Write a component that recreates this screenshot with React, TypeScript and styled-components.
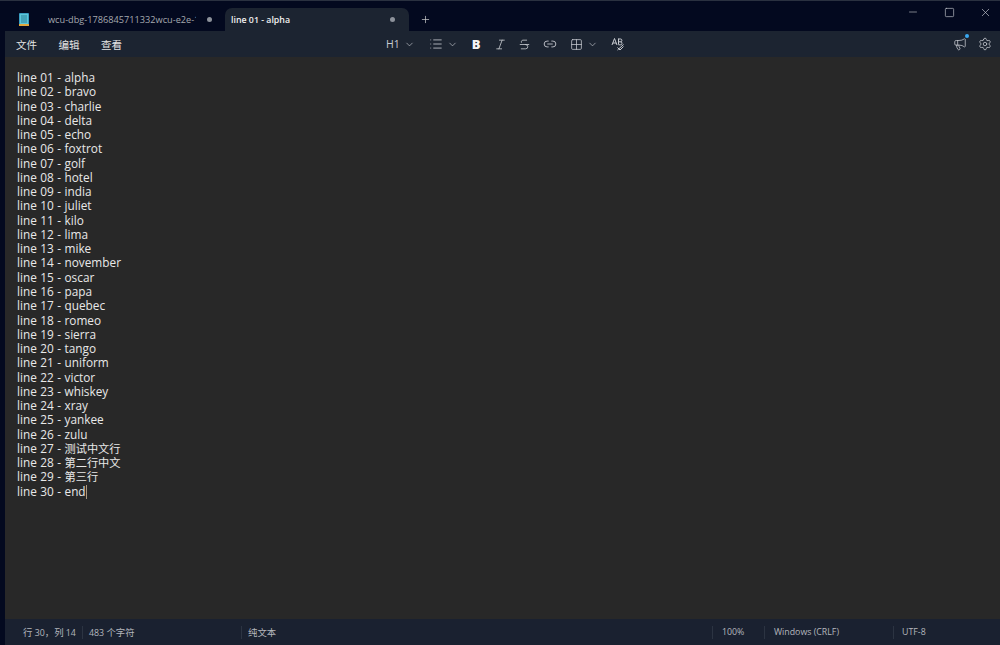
import React from 'react';
import styled, { createGlobalStyle } from 'styled-components';
import { ChevronDown, Italic, Strikethrough, Link2, Grid2x2, List, Settings, Megaphone, Plus, X, Minus, Square } from 'lucide-react';

const Global = createGlobalStyle`
  html, body { margin: 0; padding: 0; background: #03091f; }
  #root { width: 1000px; height: 645px; overflow: hidden; }
`;

const stack = `"Open Sans", "Noto Sans", "Noto Sans CJK SC", sans-serif`;

const Frame = styled.div`
  width: 1000px;
  height: 645px;
  display: flex;
  flex-direction: column;
  background: #03091f;
  border-top: 1px solid #2a3140;
  box-sizing: border-box;
  font-family: ${stack};
  color: #d8d8d8;
  overflow: hidden;
`;

const TitleBar = styled.div`
  height: 30px;
  display: flex;
  align-items: flex-end;
  padding-left: 5px;
  flex: none;
`;

const AppIcon = styled.div`
  width: 36px;
  height: 23px;
  display: flex;
  align-items: center;
  justify-content: center;
  padding-left: 2px;
  box-sizing: border-box;
  margin-right: 1px;
`;

const Tab = styled.div<{ $active?: boolean }>`
  width: ${p => (p.$active ? '184px' : '183px')};
  height: 23px;
  box-sizing: border-box;
  display: flex;
  align-items: center;
  justify-content: space-between;
  padding: ${p => (p.$active ? '0 14px 0 6px' : '0 13px 0 6px')};
  background: ${p => (p.$active ? '#1c2431' : 'transparent')};
  border-radius: 7px 7px 0 0;
  font-size: ${p => (p.$active ? '8.8px' : '9.2px')};
  font-weight: ${p => (p.$active ? 600 : 400)};
  color: ${p => (p.$active ? '#f0f0f0' : '#a5a8ae')};
  white-space: nowrap;
`;

const TabLabel = styled.span`
  width: 148px;
  overflow: hidden;
`;

const Dot = styled.span`
  width: 5px;
  height: 5px;
  border-radius: 50%;
  background: #8d929b;
  flex: none;
`;

const NewTab = styled.div`
  width: 33px;
  height: 23px;
  display: flex;
  align-items: center;
  justify-content: center;
  color: #c8c8c8;
`;

const WindowButtons = styled.div`
  margin-left: auto;
  align-self: flex-start;
  display: flex;
  gap: 6px;
  color: #c9ccd2;
`;

const WindowButton = styled.div`
  width: 30px;
  height: 22px;
  display: flex;
  align-items: center;
  justify-content: center;
`;

const Toolbar = styled.div`
  height: 26px;
  flex: none;
  margin-left: 5px;
  background: #1c2431;
  display: grid;
  grid-template-columns: 370px auto 1fr;
  align-items: center;
  padding: 0 8px 0 11px;
`;

const Menu = styled.div`
  display: flex;
  gap: 21.5px;
  font-size: 10.5px;
  color: #e2e2e2;
`;

const Tools = styled.div`
  display: flex;
  align-items: center;
  color: #c9ccd2;
`;

const Tool = styled.div<{ $gap?: number }>`
  display: flex;
  align-items: center;
  gap: 4px;
  margin-right: ${p => p.$gap ?? 0}px;
  font-size: 10.5px;
`;

const BoldGlyph = styled.span`
  width: 13px;
  text-align: center;
  font-size: 13px;
  font-weight: 800;
  line-height: 13px;
  color: #f4f4f4;
`;

const ToolsRight = styled.div`
  display: flex;
  justify-content: flex-end;
  align-items: center;
  gap: 11px;
  color: #c9ccd2;
`;

const Badge = styled.div`
  position: relative;
  display: flex;
`;

const BadgeDot = styled.span`
  position: absolute;
  top: -3px;
  right: -2px;
  width: 4px;
  height: 4px;
  border-radius: 50%;
  background: #3aa8f0;
`;

const Editor = styled.div`
  flex: 1;
  margin-left: 5px;
  background: #282828;
  padding: 13px 12px;
  font-size: 11.8px;
  word-spacing: 0.4px;
  line-height: 14.28px;
  color: #e8e8e8;
`;

const Line = styled.div`
  white-space: nowrap;
  height: 14.28px;
`;

const Cjk = styled.span<{ $size: number }>`
  font-size: ${p => p.$size}px;
`;

const Caret = styled.span`
  display: inline-block;
  width: 1px;
  height: 14px;
  background: #a89880;
  vertical-align: -3px;
`;

const StatusBar = styled.div`
  height: 26px;
  flex: none;
  margin-left: 5px;
  background: #1a2130;
  display: flex;
  align-items: center;
  font-size: 8.8px;
  color: #b4b7bd;
`;

const StatusCell = styled.div<{ $w: number; $pad?: number; $sep?: boolean }>`
  width: ${p => p.$w}px;
  box-sizing: border-box;
  padding-left: ${p => p.$pad ?? 6}px;
  height: 13px;
  line-height: 13px;
  white-space: nowrap;
  border-left: ${p => (p.$sep ? '1px solid #2c3442' : 'none')};
`;

const lines = [
  'alpha', 'bravo', 'charlie', 'delta', 'echo', 'foxtrot', 'golf', 'hotel', 'india', 'juliet',
  'kilo', 'lima', 'mike', 'november', 'oscar', 'papa', 'quebec', 'romeo', 'sierra', 'tango',
  'uniform', 'victor', 'whiskey', 'xray', 'yankee', 'zulu', '测试中文行', '第二行中文', '第三行', 'end',
];

const pad = (n: number) => String(n).padStart(2, '0');
const isCjk = (s: string) => s.charCodeAt(0) > 255;

const SpellIcon = () => (
  <svg width="14" height="14" viewBox="0 0 14 14" fill="none" stroke="currentColor" strokeWidth="1">
    <path d="M1 8 3.5 1.5 6 8M1.8 6h3.4" />
    <path d="M7.5 1.5v6M7.5 2h2a1.4 1.4 0 0 1 0 2.8h-2M9.5 4.8a1.5 1.5 0 0 1 0 3h-2" />
    <path d="M6.5 13 12.5 7.5M6.5 10.5l2.5 2.5 3.5-3.5" />
  </svg>
);

const NotebookIcon = () => (
  <svg width="10" height="13" viewBox="0 0 10 13">
    <rect width="10" height="13" rx="1" fill="#3a9dc0" />
    <rect x="1" y="1" width="8" height="10" fill="#5cc6d8" />
    <path d="M2 3h6M2 5h6M2 7h6M2 9h6" stroke="#1d6f8a" strokeWidth="0.8" />
    <rect y="11" width="10" height="2" fill="#e0a63c" />
  </svg>
);

export default function App() {
  return (
    <>
      <Global />
      <Frame>
        <TitleBar>
          <AppIcon><NotebookIcon /></AppIcon>
          <Tab>
            <TabLabel>wcu-dbg-1786845711332wcu-e2e-1786845711332</TabLabel>
            <Dot />
          </Tab>
          <Tab $active>
            <span>line 01 - alpha</span>
            <Dot />
          </Tab>
          <NewTab><Plus size={11} strokeWidth={1.6} /></NewTab>
          <WindowButtons>
            <WindowButton><Minus size={12} strokeWidth={1.2} /></WindowButton>
            <WindowButton><Square size={11} strokeWidth={1.4} /></WindowButton>
            <WindowButton><X size={13} strokeWidth={1.2} /></WindowButton>
          </WindowButtons>
        </TitleBar>
        <Toolbar>
          <Menu>
            <span>文件</span>
            <span>编辑</span>
            <span>查看</span>
          </Menu>
          <Tools>
            <Tool $gap={14}>H1 <ChevronDown size={11} strokeWidth={1.4} /></Tool>
            <Tool $gap={12}><List size={14} strokeWidth={1.4} /><ChevronDown size={11} strokeWidth={1.4} /></Tool>
            <Tool $gap={11}><BoldGlyph>B</BoldGlyph></Tool>
            <Tool $gap={11}><Italic size={13} strokeWidth={1.5} /></Tool>
            <Tool $gap={12}><Strikethrough size={13} strokeWidth={1.5} /></Tool>
            <Tool $gap={13}><Link2 size={14} strokeWidth={1.5} /></Tool>
            <Tool $gap={13}><Grid2x2 size={13} strokeWidth={1.4} /><ChevronDown size={11} strokeWidth={1.4} /></Tool>
            <Tool><SpellIcon /></Tool>
          </Tools>
          <ToolsRight>
            <Badge><Megaphone size={14} strokeWidth={1.3} /><BadgeDot /></Badge>
            <Settings size={14} strokeWidth={1.3} />
          </ToolsRight>
        </Toolbar>
        <Editor>
          {lines.map((word, i) => (
            <Line key={word}>
              line {pad(i + 1)} - {isCjk(word) ? <Cjk $size={11.2}>{word}</Cjk> : word}
              {i === lines.length - 1 && <Caret />}
            </Line>
          ))}
        </Editor>
        <StatusBar>
          <StatusCell $w={77} $pad={18}><Cjk $size={9.4}>行</Cjk> 30<Cjk $size={9.4}>，列</Cjk> 14</StatusCell>
          <StatusCell $w={159} $sep>483 <Cjk $size={9.4}>个字符</Cjk></StatusCell>
          <StatusCell $w={471} $sep><Cjk $size={9.4}>纯文本</Cjk></StatusCell>
          <StatusCell $w={52} $pad={9} $sep>100%</StatusCell>
          <StatusCell $w={129} $pad={9} $sep>Windows (CRLF)</StatusCell>
          <StatusCell $w={90} $pad={8} $sep>UTF-8</StatusCell>
        </StatusBar>
      </Frame>
    </>
  );
}
